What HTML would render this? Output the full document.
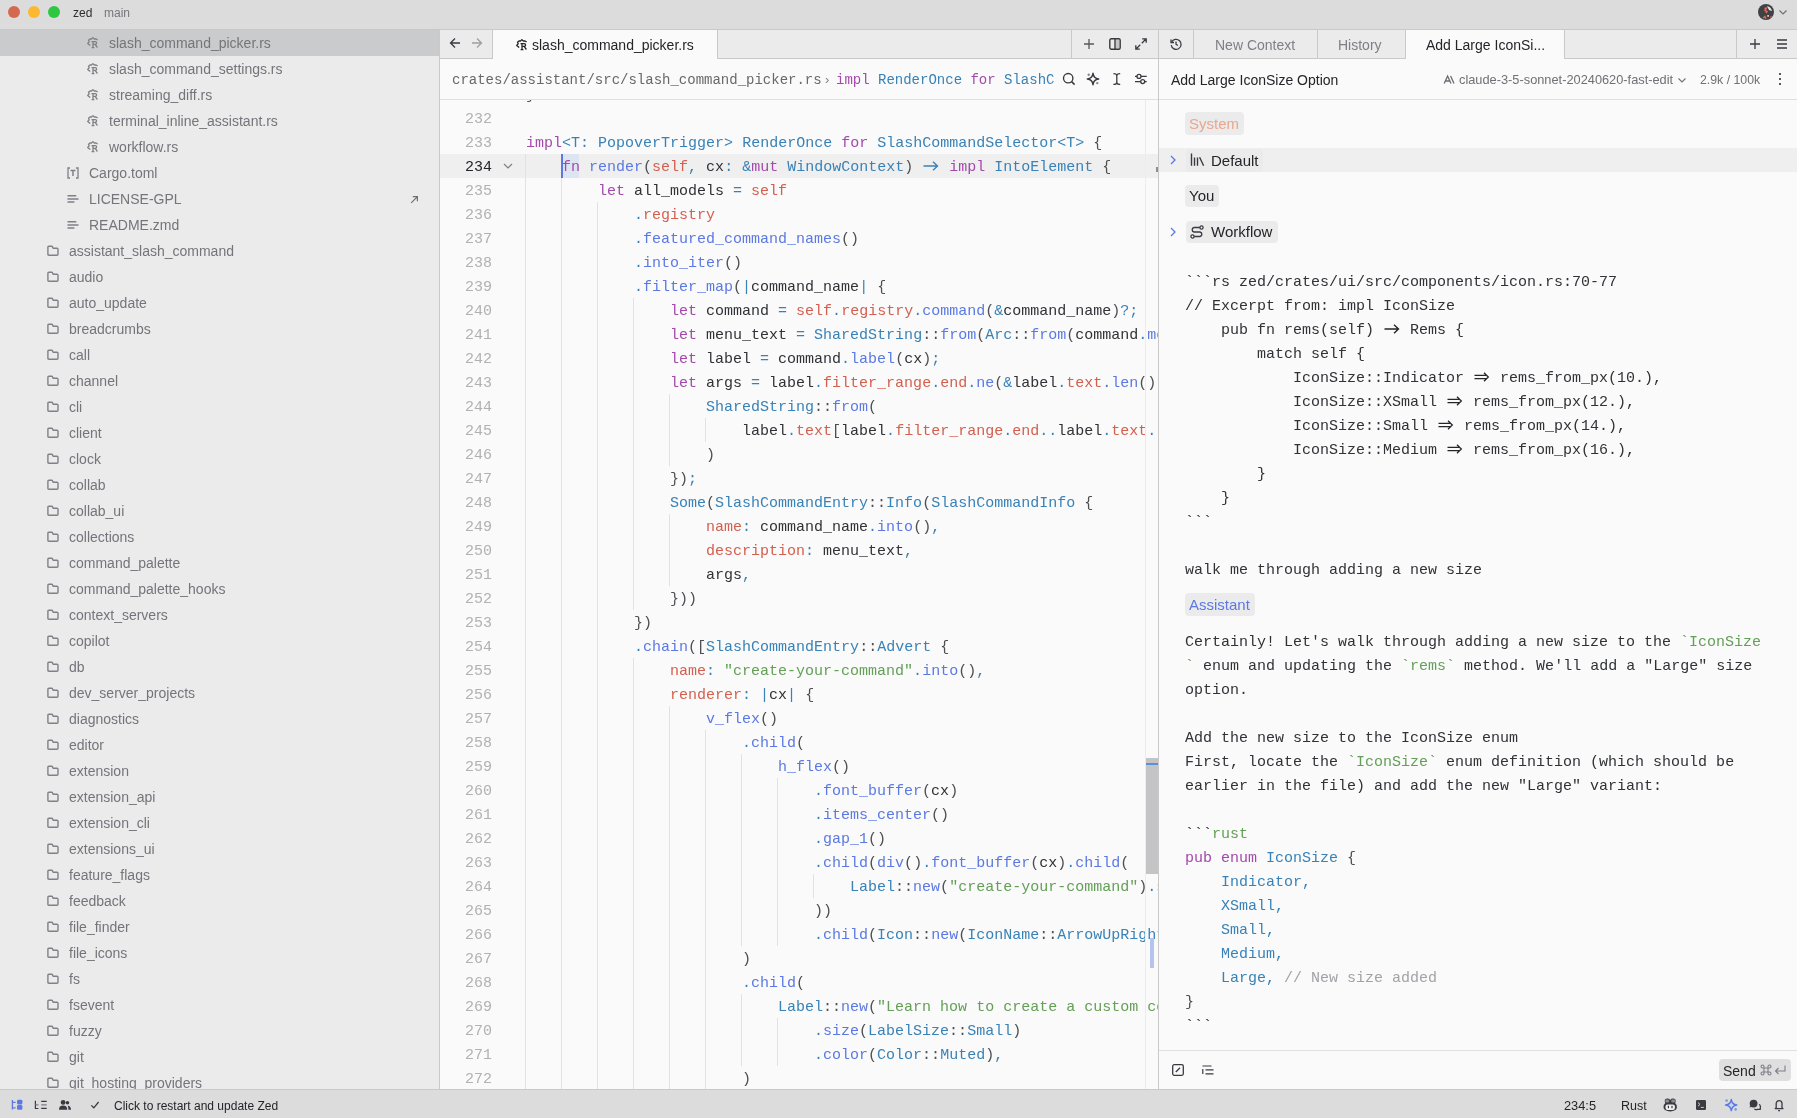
<!DOCTYPE html><html><head><meta charset="utf-8"><style>
*{box-sizing:border-box;margin:0;padding:0}
html,body{width:1797px;height:1118px;overflow:hidden;background:#dcdcdd}
body{position:relative;font-family:"Liberation Sans",sans-serif;color:#242529}
.a{position:absolute}
.mono{font-family:"Liberation Mono",monospace}
.row{position:absolute;left:0;width:439px;height:26px;line-height:26px;font-size:14px;color:#74747a;white-space:pre}
.ln{position:absolute;left:440px;width:52px;text-align:right;font-family:"Liberation Mono",monospace;font-size:15px;color:#b1b1b3;height:24px;line-height:24px}
.cl{position:absolute;left:526px;font-family:"Liberation Mono",monospace;font-size:15px;white-space:pre;height:24px;line-height:24px;color:#303236}
.g{position:absolute;width:1px;background:#e2e2e3}
.k{color:#a449ab}.t{color:#3882b7}.f{color:#5b79e3}.p{color:#d3604f}.s{color:#649f57}.o{color:#3882b7}.b{color:#4d4f52}.c{color:#a2a3a7}.tk{color:#649f57}
.rl{position:absolute;left:1185px;font-family:"Liberation Mono",monospace;font-size:15px;white-space:pre;height:24px;line-height:24px;color:#303236}
.badge{position:absolute;height:22px;line-height:22px;border-radius:4px;background:#ebebec;font-size:15px;padding:0 4px;white-space:pre}
.lig{display:inline-block;width:18px;text-align:center}
svg{position:absolute;overflow:visible}
.a,.row,.ln,.cl,.rl,.badge{will-change:transform}
</style></head><body><div class="a" style="left:0;top:0;width:1797px;height:29px;background:#dcdcdd"></div>
<div class="a" style="left:8px;top:6px;width:12px;height:12px;border-radius:6px;background:#d5694f"></div>
<div class="a" style="left:28px;top:6px;width:12px;height:12px;border-radius:6px;background:#feb82f"></div>
<div class="a" style="left:48px;top:6px;width:12px;height:12px;border-radius:6px;background:#2dc743"></div>
<div class="a" style="left:73px;top:5px;font-size:12px;line-height:16px;color:#2c2d31">zed</div>
<div class="a" style="left:104px;top:5px;font-size:12px;line-height:16px;color:#76767c">main</div>
<svg style="left:1758px;top:4px" width="16" height="16" viewBox="0 0 16 16"><circle cx="8" cy="8" r="8" fill="#404247"/><path d="M9 2 Q13 3 14 7 L11 6 Z" fill="#e8e8e8"/><path d="M6.5 4.5 L8.5 4 L7 6.5 L9 7.5 L8 9" stroke="#e46f55" stroke-width="1.4" fill="none"/><rect x="9.2" y="11" width="1.8" height="1.8" fill="#f3b39f"/><path d="M5 14 L7 12.5 L8 15" stroke="#e46f55" stroke-width="1.2" fill="none"/><path d="M12.5 12.5 L13.5 13.5" stroke="#e46f55" stroke-width="1.2"/></svg>
<svg style="left:1779px;top:10px" width="8" height="5" viewBox="0 0 8 5"><path d="M0.5 0.5 L4 4 L7.5 0.5" stroke="#6f6f75" stroke-width="1.2" fill="none"/></svg>
<div class="a" style="left:0;top:29px;width:1797px;height:1px;background:#c9c9ca"></div>
<div class="a" style="left:0;top:30px;width:439px;height:1059px;background:#ebebec;overflow:hidden">
<div class="a" style="left:0;top:0;width:439px;height:26px;background:#cacbcc"></div>
<div class="row" style="top:0px;left:109px;width:auto">slash_command_picker.rs</div>
<svg style="left:87px;top:7px" width="12" height="12" viewBox="0 0 12 12"><path d="M3.2 8.6 L0.7 6.4 L2.2 4.7 L1.5 3.3 L3 2 H4.5 L5.9 0.6 L7.3 2 H9 L10.6 2.9" stroke="#808086" stroke-width="1.3" fill="none" stroke-linejoin="round"/><path d="M4.5 4.7 H8.2 A1.4 1.35 0 0 1 8.2 7.4 H6 M6 4.7 V10.6 M4.6 10.6 H7.4 M8.1 7.4 L10.4 10.5" stroke="#808086" stroke-width="1.3" fill="none"/></svg>
<div class="row" style="top:26px;left:109px;width:auto">slash_command_settings.rs</div>
<svg style="left:87px;top:33px" width="12" height="12" viewBox="0 0 12 12"><path d="M3.2 8.6 L0.7 6.4 L2.2 4.7 L1.5 3.3 L3 2 H4.5 L5.9 0.6 L7.3 2 H9 L10.6 2.9" stroke="#808086" stroke-width="1.3" fill="none" stroke-linejoin="round"/><path d="M4.5 4.7 H8.2 A1.4 1.35 0 0 1 8.2 7.4 H6 M6 4.7 V10.6 M4.6 10.6 H7.4 M8.1 7.4 L10.4 10.5" stroke="#808086" stroke-width="1.3" fill="none"/></svg>
<div class="row" style="top:52px;left:109px;width:auto">streaming_diff.rs</div>
<svg style="left:87px;top:59px" width="12" height="12" viewBox="0 0 12 12"><path d="M3.2 8.6 L0.7 6.4 L2.2 4.7 L1.5 3.3 L3 2 H4.5 L5.9 0.6 L7.3 2 H9 L10.6 2.9" stroke="#808086" stroke-width="1.3" fill="none" stroke-linejoin="round"/><path d="M4.5 4.7 H8.2 A1.4 1.35 0 0 1 8.2 7.4 H6 M6 4.7 V10.6 M4.6 10.6 H7.4 M8.1 7.4 L10.4 10.5" stroke="#808086" stroke-width="1.3" fill="none"/></svg>
<div class="row" style="top:78px;left:109px;width:auto">terminal_inline_assistant.rs</div>
<svg style="left:87px;top:85px" width="12" height="12" viewBox="0 0 12 12"><path d="M3.2 8.6 L0.7 6.4 L2.2 4.7 L1.5 3.3 L3 2 H4.5 L5.9 0.6 L7.3 2 H9 L10.6 2.9" stroke="#808086" stroke-width="1.3" fill="none" stroke-linejoin="round"/><path d="M4.5 4.7 H8.2 A1.4 1.35 0 0 1 8.2 7.4 H6 M6 4.7 V10.6 M4.6 10.6 H7.4 M8.1 7.4 L10.4 10.5" stroke="#808086" stroke-width="1.3" fill="none"/></svg>
<div class="row" style="top:104px;left:109px;width:auto">workflow.rs</div>
<svg style="left:87px;top:111px" width="12" height="12" viewBox="0 0 12 12"><path d="M3.2 8.6 L0.7 6.4 L2.2 4.7 L1.5 3.3 L3 2 H4.5 L5.9 0.6 L7.3 2 H9 L10.6 2.9" stroke="#808086" stroke-width="1.3" fill="none" stroke-linejoin="round"/><path d="M4.5 4.7 H8.2 A1.4 1.35 0 0 1 8.2 7.4 H6 M6 4.7 V10.6 M4.6 10.6 H7.4 M8.1 7.4 L10.4 10.5" stroke="#808086" stroke-width="1.3" fill="none"/></svg>
<div class="row" style="top:130px;left:89px;width:auto">Cargo.toml</div>
<svg style="left:67px;top:137px" width="12" height="12" viewBox="0 0 12 12"><path d="M3 1 H1 V11 H3 M9 1 H11 V11 H9" stroke="#808086" stroke-width="1.3" fill="none"/><path d="M3.5 3.5 H8.5 M6 3.5 V9" stroke="#808086" stroke-width="1.5" fill="none"/></svg>
<div class="row" style="top:156px;left:89px;width:auto">LICENSE-GPL</div>
<svg style="left:67px;top:163px" width="12" height="12" viewBox="0 0 12 12"><path d="M0.5 2.8 H9.3 M0.5 6 H11.5 M0.5 9 H7.4" stroke="#808086" stroke-width="1.6" fill="none"/></svg>
<div class="row" style="top:182px;left:89px;width:auto">README.zmd</div>
<svg style="left:67px;top:189px" width="12" height="12" viewBox="0 0 12 12"><path d="M0.5 2.8 H9.3 M0.5 6 H11.5 M0.5 9 H7.4" stroke="#808086" stroke-width="1.6" fill="none"/></svg>
<div class="row" style="top:208px;left:69px;width:auto">assistant_slash_command</div>
<svg style="left:47px;top:215px" width="12" height="12" viewBox="0 0 12 12"><path d="M0.9 2.3 Q0.9 1.3 1.9 1.3 H5.2 L6.3 3.3 H10 Q11 3.3 11 4.3 V9.3 Q11 10.3 10 10.3 H1.9 Q0.9 10.3 0.9 9.3 Z" stroke="#808086" stroke-width="1.4" fill="none" stroke-linejoin="round"/></svg>
<div class="row" style="top:234px;left:69px;width:auto">audio</div>
<svg style="left:47px;top:241px" width="12" height="12" viewBox="0 0 12 12"><path d="M0.9 2.3 Q0.9 1.3 1.9 1.3 H5.2 L6.3 3.3 H10 Q11 3.3 11 4.3 V9.3 Q11 10.3 10 10.3 H1.9 Q0.9 10.3 0.9 9.3 Z" stroke="#808086" stroke-width="1.4" fill="none" stroke-linejoin="round"/></svg>
<div class="row" style="top:260px;left:69px;width:auto">auto_update</div>
<svg style="left:47px;top:267px" width="12" height="12" viewBox="0 0 12 12"><path d="M0.9 2.3 Q0.9 1.3 1.9 1.3 H5.2 L6.3 3.3 H10 Q11 3.3 11 4.3 V9.3 Q11 10.3 10 10.3 H1.9 Q0.9 10.3 0.9 9.3 Z" stroke="#808086" stroke-width="1.4" fill="none" stroke-linejoin="round"/></svg>
<div class="row" style="top:286px;left:69px;width:auto">breadcrumbs</div>
<svg style="left:47px;top:293px" width="12" height="12" viewBox="0 0 12 12"><path d="M0.9 2.3 Q0.9 1.3 1.9 1.3 H5.2 L6.3 3.3 H10 Q11 3.3 11 4.3 V9.3 Q11 10.3 10 10.3 H1.9 Q0.9 10.3 0.9 9.3 Z" stroke="#808086" stroke-width="1.4" fill="none" stroke-linejoin="round"/></svg>
<div class="row" style="top:312px;left:69px;width:auto">call</div>
<svg style="left:47px;top:319px" width="12" height="12" viewBox="0 0 12 12"><path d="M0.9 2.3 Q0.9 1.3 1.9 1.3 H5.2 L6.3 3.3 H10 Q11 3.3 11 4.3 V9.3 Q11 10.3 10 10.3 H1.9 Q0.9 10.3 0.9 9.3 Z" stroke="#808086" stroke-width="1.4" fill="none" stroke-linejoin="round"/></svg>
<div class="row" style="top:338px;left:69px;width:auto">channel</div>
<svg style="left:47px;top:345px" width="12" height="12" viewBox="0 0 12 12"><path d="M0.9 2.3 Q0.9 1.3 1.9 1.3 H5.2 L6.3 3.3 H10 Q11 3.3 11 4.3 V9.3 Q11 10.3 10 10.3 H1.9 Q0.9 10.3 0.9 9.3 Z" stroke="#808086" stroke-width="1.4" fill="none" stroke-linejoin="round"/></svg>
<div class="row" style="top:364px;left:69px;width:auto">cli</div>
<svg style="left:47px;top:371px" width="12" height="12" viewBox="0 0 12 12"><path d="M0.9 2.3 Q0.9 1.3 1.9 1.3 H5.2 L6.3 3.3 H10 Q11 3.3 11 4.3 V9.3 Q11 10.3 10 10.3 H1.9 Q0.9 10.3 0.9 9.3 Z" stroke="#808086" stroke-width="1.4" fill="none" stroke-linejoin="round"/></svg>
<div class="row" style="top:390px;left:69px;width:auto">client</div>
<svg style="left:47px;top:397px" width="12" height="12" viewBox="0 0 12 12"><path d="M0.9 2.3 Q0.9 1.3 1.9 1.3 H5.2 L6.3 3.3 H10 Q11 3.3 11 4.3 V9.3 Q11 10.3 10 10.3 H1.9 Q0.9 10.3 0.9 9.3 Z" stroke="#808086" stroke-width="1.4" fill="none" stroke-linejoin="round"/></svg>
<div class="row" style="top:416px;left:69px;width:auto">clock</div>
<svg style="left:47px;top:423px" width="12" height="12" viewBox="0 0 12 12"><path d="M0.9 2.3 Q0.9 1.3 1.9 1.3 H5.2 L6.3 3.3 H10 Q11 3.3 11 4.3 V9.3 Q11 10.3 10 10.3 H1.9 Q0.9 10.3 0.9 9.3 Z" stroke="#808086" stroke-width="1.4" fill="none" stroke-linejoin="round"/></svg>
<div class="row" style="top:442px;left:69px;width:auto">collab</div>
<svg style="left:47px;top:449px" width="12" height="12" viewBox="0 0 12 12"><path d="M0.9 2.3 Q0.9 1.3 1.9 1.3 H5.2 L6.3 3.3 H10 Q11 3.3 11 4.3 V9.3 Q11 10.3 10 10.3 H1.9 Q0.9 10.3 0.9 9.3 Z" stroke="#808086" stroke-width="1.4" fill="none" stroke-linejoin="round"/></svg>
<div class="row" style="top:468px;left:69px;width:auto">collab_ui</div>
<svg style="left:47px;top:475px" width="12" height="12" viewBox="0 0 12 12"><path d="M0.9 2.3 Q0.9 1.3 1.9 1.3 H5.2 L6.3 3.3 H10 Q11 3.3 11 4.3 V9.3 Q11 10.3 10 10.3 H1.9 Q0.9 10.3 0.9 9.3 Z" stroke="#808086" stroke-width="1.4" fill="none" stroke-linejoin="round"/></svg>
<div class="row" style="top:494px;left:69px;width:auto">collections</div>
<svg style="left:47px;top:501px" width="12" height="12" viewBox="0 0 12 12"><path d="M0.9 2.3 Q0.9 1.3 1.9 1.3 H5.2 L6.3 3.3 H10 Q11 3.3 11 4.3 V9.3 Q11 10.3 10 10.3 H1.9 Q0.9 10.3 0.9 9.3 Z" stroke="#808086" stroke-width="1.4" fill="none" stroke-linejoin="round"/></svg>
<div class="row" style="top:520px;left:69px;width:auto">command_palette</div>
<svg style="left:47px;top:527px" width="12" height="12" viewBox="0 0 12 12"><path d="M0.9 2.3 Q0.9 1.3 1.9 1.3 H5.2 L6.3 3.3 H10 Q11 3.3 11 4.3 V9.3 Q11 10.3 10 10.3 H1.9 Q0.9 10.3 0.9 9.3 Z" stroke="#808086" stroke-width="1.4" fill="none" stroke-linejoin="round"/></svg>
<div class="row" style="top:546px;left:69px;width:auto">command_palette_hooks</div>
<svg style="left:47px;top:553px" width="12" height="12" viewBox="0 0 12 12"><path d="M0.9 2.3 Q0.9 1.3 1.9 1.3 H5.2 L6.3 3.3 H10 Q11 3.3 11 4.3 V9.3 Q11 10.3 10 10.3 H1.9 Q0.9 10.3 0.9 9.3 Z" stroke="#808086" stroke-width="1.4" fill="none" stroke-linejoin="round"/></svg>
<div class="row" style="top:572px;left:69px;width:auto">context_servers</div>
<svg style="left:47px;top:579px" width="12" height="12" viewBox="0 0 12 12"><path d="M0.9 2.3 Q0.9 1.3 1.9 1.3 H5.2 L6.3 3.3 H10 Q11 3.3 11 4.3 V9.3 Q11 10.3 10 10.3 H1.9 Q0.9 10.3 0.9 9.3 Z" stroke="#808086" stroke-width="1.4" fill="none" stroke-linejoin="round"/></svg>
<div class="row" style="top:598px;left:69px;width:auto">copilot</div>
<svg style="left:47px;top:605px" width="12" height="12" viewBox="0 0 12 12"><path d="M0.9 2.3 Q0.9 1.3 1.9 1.3 H5.2 L6.3 3.3 H10 Q11 3.3 11 4.3 V9.3 Q11 10.3 10 10.3 H1.9 Q0.9 10.3 0.9 9.3 Z" stroke="#808086" stroke-width="1.4" fill="none" stroke-linejoin="round"/></svg>
<div class="row" style="top:624px;left:69px;width:auto">db</div>
<svg style="left:47px;top:631px" width="12" height="12" viewBox="0 0 12 12"><path d="M0.9 2.3 Q0.9 1.3 1.9 1.3 H5.2 L6.3 3.3 H10 Q11 3.3 11 4.3 V9.3 Q11 10.3 10 10.3 H1.9 Q0.9 10.3 0.9 9.3 Z" stroke="#808086" stroke-width="1.4" fill="none" stroke-linejoin="round"/></svg>
<div class="row" style="top:650px;left:69px;width:auto">dev_server_projects</div>
<svg style="left:47px;top:657px" width="12" height="12" viewBox="0 0 12 12"><path d="M0.9 2.3 Q0.9 1.3 1.9 1.3 H5.2 L6.3 3.3 H10 Q11 3.3 11 4.3 V9.3 Q11 10.3 10 10.3 H1.9 Q0.9 10.3 0.9 9.3 Z" stroke="#808086" stroke-width="1.4" fill="none" stroke-linejoin="round"/></svg>
<div class="row" style="top:676px;left:69px;width:auto">diagnostics</div>
<svg style="left:47px;top:683px" width="12" height="12" viewBox="0 0 12 12"><path d="M0.9 2.3 Q0.9 1.3 1.9 1.3 H5.2 L6.3 3.3 H10 Q11 3.3 11 4.3 V9.3 Q11 10.3 10 10.3 H1.9 Q0.9 10.3 0.9 9.3 Z" stroke="#808086" stroke-width="1.4" fill="none" stroke-linejoin="round"/></svg>
<div class="row" style="top:702px;left:69px;width:auto">editor</div>
<svg style="left:47px;top:709px" width="12" height="12" viewBox="0 0 12 12"><path d="M0.9 2.3 Q0.9 1.3 1.9 1.3 H5.2 L6.3 3.3 H10 Q11 3.3 11 4.3 V9.3 Q11 10.3 10 10.3 H1.9 Q0.9 10.3 0.9 9.3 Z" stroke="#808086" stroke-width="1.4" fill="none" stroke-linejoin="round"/></svg>
<div class="row" style="top:728px;left:69px;width:auto">extension</div>
<svg style="left:47px;top:735px" width="12" height="12" viewBox="0 0 12 12"><path d="M0.9 2.3 Q0.9 1.3 1.9 1.3 H5.2 L6.3 3.3 H10 Q11 3.3 11 4.3 V9.3 Q11 10.3 10 10.3 H1.9 Q0.9 10.3 0.9 9.3 Z" stroke="#808086" stroke-width="1.4" fill="none" stroke-linejoin="round"/></svg>
<div class="row" style="top:754px;left:69px;width:auto">extension_api</div>
<svg style="left:47px;top:761px" width="12" height="12" viewBox="0 0 12 12"><path d="M0.9 2.3 Q0.9 1.3 1.9 1.3 H5.2 L6.3 3.3 H10 Q11 3.3 11 4.3 V9.3 Q11 10.3 10 10.3 H1.9 Q0.9 10.3 0.9 9.3 Z" stroke="#808086" stroke-width="1.4" fill="none" stroke-linejoin="round"/></svg>
<div class="row" style="top:780px;left:69px;width:auto">extension_cli</div>
<svg style="left:47px;top:787px" width="12" height="12" viewBox="0 0 12 12"><path d="M0.9 2.3 Q0.9 1.3 1.9 1.3 H5.2 L6.3 3.3 H10 Q11 3.3 11 4.3 V9.3 Q11 10.3 10 10.3 H1.9 Q0.9 10.3 0.9 9.3 Z" stroke="#808086" stroke-width="1.4" fill="none" stroke-linejoin="round"/></svg>
<div class="row" style="top:806px;left:69px;width:auto">extensions_ui</div>
<svg style="left:47px;top:813px" width="12" height="12" viewBox="0 0 12 12"><path d="M0.9 2.3 Q0.9 1.3 1.9 1.3 H5.2 L6.3 3.3 H10 Q11 3.3 11 4.3 V9.3 Q11 10.3 10 10.3 H1.9 Q0.9 10.3 0.9 9.3 Z" stroke="#808086" stroke-width="1.4" fill="none" stroke-linejoin="round"/></svg>
<div class="row" style="top:832px;left:69px;width:auto">feature_flags</div>
<svg style="left:47px;top:839px" width="12" height="12" viewBox="0 0 12 12"><path d="M0.9 2.3 Q0.9 1.3 1.9 1.3 H5.2 L6.3 3.3 H10 Q11 3.3 11 4.3 V9.3 Q11 10.3 10 10.3 H1.9 Q0.9 10.3 0.9 9.3 Z" stroke="#808086" stroke-width="1.4" fill="none" stroke-linejoin="round"/></svg>
<div class="row" style="top:858px;left:69px;width:auto">feedback</div>
<svg style="left:47px;top:865px" width="12" height="12" viewBox="0 0 12 12"><path d="M0.9 2.3 Q0.9 1.3 1.9 1.3 H5.2 L6.3 3.3 H10 Q11 3.3 11 4.3 V9.3 Q11 10.3 10 10.3 H1.9 Q0.9 10.3 0.9 9.3 Z" stroke="#808086" stroke-width="1.4" fill="none" stroke-linejoin="round"/></svg>
<div class="row" style="top:884px;left:69px;width:auto">file_finder</div>
<svg style="left:47px;top:891px" width="12" height="12" viewBox="0 0 12 12"><path d="M0.9 2.3 Q0.9 1.3 1.9 1.3 H5.2 L6.3 3.3 H10 Q11 3.3 11 4.3 V9.3 Q11 10.3 10 10.3 H1.9 Q0.9 10.3 0.9 9.3 Z" stroke="#808086" stroke-width="1.4" fill="none" stroke-linejoin="round"/></svg>
<div class="row" style="top:910px;left:69px;width:auto">file_icons</div>
<svg style="left:47px;top:917px" width="12" height="12" viewBox="0 0 12 12"><path d="M0.9 2.3 Q0.9 1.3 1.9 1.3 H5.2 L6.3 3.3 H10 Q11 3.3 11 4.3 V9.3 Q11 10.3 10 10.3 H1.9 Q0.9 10.3 0.9 9.3 Z" stroke="#808086" stroke-width="1.4" fill="none" stroke-linejoin="round"/></svg>
<div class="row" style="top:936px;left:69px;width:auto">fs</div>
<svg style="left:47px;top:943px" width="12" height="12" viewBox="0 0 12 12"><path d="M0.9 2.3 Q0.9 1.3 1.9 1.3 H5.2 L6.3 3.3 H10 Q11 3.3 11 4.3 V9.3 Q11 10.3 10 10.3 H1.9 Q0.9 10.3 0.9 9.3 Z" stroke="#808086" stroke-width="1.4" fill="none" stroke-linejoin="round"/></svg>
<div class="row" style="top:962px;left:69px;width:auto">fsevent</div>
<svg style="left:47px;top:969px" width="12" height="12" viewBox="0 0 12 12"><path d="M0.9 2.3 Q0.9 1.3 1.9 1.3 H5.2 L6.3 3.3 H10 Q11 3.3 11 4.3 V9.3 Q11 10.3 10 10.3 H1.9 Q0.9 10.3 0.9 9.3 Z" stroke="#808086" stroke-width="1.4" fill="none" stroke-linejoin="round"/></svg>
<div class="row" style="top:988px;left:69px;width:auto">fuzzy</div>
<svg style="left:47px;top:995px" width="12" height="12" viewBox="0 0 12 12"><path d="M0.9 2.3 Q0.9 1.3 1.9 1.3 H5.2 L6.3 3.3 H10 Q11 3.3 11 4.3 V9.3 Q11 10.3 10 10.3 H1.9 Q0.9 10.3 0.9 9.3 Z" stroke="#808086" stroke-width="1.4" fill="none" stroke-linejoin="round"/></svg>
<div class="row" style="top:1014px;left:69px;width:auto">git</div>
<svg style="left:47px;top:1021px" width="12" height="12" viewBox="0 0 12 12"><path d="M0.9 2.3 Q0.9 1.3 1.9 1.3 H5.2 L6.3 3.3 H10 Q11 3.3 11 4.3 V9.3 Q11 10.3 10 10.3 H1.9 Q0.9 10.3 0.9 9.3 Z" stroke="#808086" stroke-width="1.4" fill="none" stroke-linejoin="round"/></svg>
<div class="row" style="top:1040px;left:69px;width:auto">git_hosting_providers</div>
<svg style="left:47px;top:1047px" width="12" height="12" viewBox="0 0 12 12"><path d="M0.9 2.3 Q0.9 1.3 1.9 1.3 H5.2 L6.3 3.3 H10 Q11 3.3 11 4.3 V9.3 Q11 10.3 10 10.3 H1.9 Q0.9 10.3 0.9 9.3 Z" stroke="#808086" stroke-width="1.4" fill="none" stroke-linejoin="round"/></svg>
<svg style="left:410px;top:165px" width="9" height="9" viewBox="0 0 9 9"><path d="M1.2 7.8 L7.2 1.8 M2.8 1.6 H7.4 V6.2" stroke="#6f6f75" stroke-width="1.2" fill="none"/></svg>
</div>
<div class="a" style="left:439px;top:30px;width:1px;height:1059px;background:#c9c9ca"></div>
<div class="a" style="left:440px;top:30px;width:718px;height:1059px;background:#fafafa;overflow:hidden">
<div class="a" style="left:0;top:0;width:718px;height:29px;background:#ebebec;border-bottom:1px solid #c9c9ca"></div>
<div class="a" style="left:52px;top:0;width:226px;height:29px;background:#fafafa;border-left:1px solid #c9c9ca;border-right:1px solid #c9c9ca"></div>
<div class="a" style="left:631px;top:0;width:1px;height:29px;background:#c9c9ca"></div>
<svg style="left:9px;top:7px" width="12" height="12" viewBox="0 0 12 12"><path d="M11 6 H1.5 M6 1.5 L1.5 6 L6 10.5" stroke="#393b40" stroke-width="1.3" fill="none"/></svg>
<svg style="left:31px;top:7px" width="12" height="12" viewBox="0 0 12 12"><path d="M1 6 H10.5 M6 1.5 L10.5 6 L6 10.5" stroke="#a0a0a4" stroke-width="1.3" fill="none"/></svg>
<svg style="left:76px;top:9px" width="12" height="12" viewBox="0 0 12 12"><path d="M3.2 8.6 L0.7 6.4 L2.2 4.7 L1.5 3.3 L3 2 H4.5 L5.9 0.6 L7.3 2 H9 L10.6 2.9" stroke="#242529" stroke-width="1.3" fill="none" stroke-linejoin="round"/><path d="M4.5 4.7 H8.2 A1.4 1.35 0 0 1 8.2 7.4 H6 M6 4.7 V10.6 M4.6 10.6 H7.4 M8.1 7.4 L10.4 10.5" stroke="#242529" stroke-width="1.3" fill="none"/></svg>
<div class="a" style="left:92px;top:6px;font-size:14px;line-height:18px;color:#242529;white-space:pre">slash_command_picker.rs</div>
<svg style="left:643px;top:8px" width="12" height="12" viewBox="0 0 12 12"><path d="M6 1 V11 M1 6 H11" stroke="#58585a" stroke-width="1.3" fill="none"/></svg>
<svg style="left:669px;top:8px" width="12" height="12" viewBox="0 0 12 12"><rect x="0.8" y="0.8" width="10.4" height="10.4" rx="1.5" stroke="#393b40" stroke-width="1.4" fill="none"/><path d="M6 1 V11" stroke="#393b40" stroke-width="1.4"/><rect x="6.5" y="1.5" width="4" height="9" fill="#393b40" opacity="0.22"/></svg>
<svg style="left:695px;top:8px" width="12" height="12" viewBox="0 0 12 12"><path d="M7.2 0.8 H11.2 V4.8 M11.2 0.8 L6.8 5.2 M4.8 11.2 H0.8 V7.2 M0.8 11.2 L5.2 6.8" stroke="#3a3b40" stroke-width="1.3" fill="none"/></svg>
<div class="a mono" style="left:12px;top:41px;font-size:14px;line-height:18px;color:#68686d;white-space:pre">crates/assistant/src/slash_command_picker.rs</div>
<div class="a" style="left:385px;top:41px;font-size:13px;line-height:18px;color:#7e7e87">›</div>
<div class="a mono" style="left:396px;top:41px;font-size:14px;line-height:18px;white-space:pre"><span class="k">impl</span> <span class="t">RenderOnce</span> <span class="k">for</span> <span class="t">SlashC</span></div>
<div class="a" style="left:0;top:69px;width:718px;height:1px;background:#dfdfe0"></div>
</div>
<div class="a" style="left:440px;top:100px;width:718px;height:989px;background:#fafafa;overflow:hidden">
<div class="a" style="left:0;top:54px;width:718px;height:24px;background:#efeff0"></div>
<div class="g" style="left:85px;top:54px;height:24px"></div>
<div class="g" style="left:85px;top:78px;height:24px"></div>
<div class="g" style="left:121px;top:78px;height:24px"></div>
<div class="g" style="left:85px;top:102px;height:24px"></div>
<div class="g" style="left:121px;top:102px;height:24px"></div>
<div class="g" style="left:157px;top:102px;height:24px"></div>
<div class="g" style="left:85px;top:126px;height:24px"></div>
<div class="g" style="left:121px;top:126px;height:24px"></div>
<div class="g" style="left:157px;top:126px;height:24px"></div>
<div class="g" style="left:85px;top:150px;height:24px"></div>
<div class="g" style="left:121px;top:150px;height:24px"></div>
<div class="g" style="left:157px;top:150px;height:24px"></div>
<div class="g" style="left:85px;top:174px;height:24px"></div>
<div class="g" style="left:121px;top:174px;height:24px"></div>
<div class="g" style="left:157px;top:174px;height:24px"></div>
<div class="g" style="left:85px;top:198px;height:24px"></div>
<div class="g" style="left:121px;top:198px;height:24px"></div>
<div class="g" style="left:157px;top:198px;height:24px"></div>
<div class="g" style="left:193px;top:198px;height:24px"></div>
<div class="g" style="left:85px;top:222px;height:24px"></div>
<div class="g" style="left:121px;top:222px;height:24px"></div>
<div class="g" style="left:157px;top:222px;height:24px"></div>
<div class="g" style="left:193px;top:222px;height:24px"></div>
<div class="g" style="left:85px;top:246px;height:24px"></div>
<div class="g" style="left:121px;top:246px;height:24px"></div>
<div class="g" style="left:157px;top:246px;height:24px"></div>
<div class="g" style="left:193px;top:246px;height:24px"></div>
<div class="g" style="left:85px;top:270px;height:24px"></div>
<div class="g" style="left:121px;top:270px;height:24px"></div>
<div class="g" style="left:157px;top:270px;height:24px"></div>
<div class="g" style="left:193px;top:270px;height:24px"></div>
<div class="g" style="left:85px;top:294px;height:24px"></div>
<div class="g" style="left:121px;top:294px;height:24px"></div>
<div class="g" style="left:157px;top:294px;height:24px"></div>
<div class="g" style="left:193px;top:294px;height:24px"></div>
<div class="g" style="left:229px;top:294px;height:24px"></div>
<div class="g" style="left:85px;top:318px;height:24px"></div>
<div class="g" style="left:121px;top:318px;height:24px"></div>
<div class="g" style="left:157px;top:318px;height:24px"></div>
<div class="g" style="left:193px;top:318px;height:24px"></div>
<div class="g" style="left:229px;top:318px;height:24px"></div>
<div class="g" style="left:265px;top:318px;height:24px"></div>
<div class="g" style="left:85px;top:342px;height:24px"></div>
<div class="g" style="left:121px;top:342px;height:24px"></div>
<div class="g" style="left:157px;top:342px;height:24px"></div>
<div class="g" style="left:193px;top:342px;height:24px"></div>
<div class="g" style="left:229px;top:342px;height:24px"></div>
<div class="g" style="left:85px;top:366px;height:24px"></div>
<div class="g" style="left:121px;top:366px;height:24px"></div>
<div class="g" style="left:157px;top:366px;height:24px"></div>
<div class="g" style="left:193px;top:366px;height:24px"></div>
<div class="g" style="left:85px;top:390px;height:24px"></div>
<div class="g" style="left:121px;top:390px;height:24px"></div>
<div class="g" style="left:157px;top:390px;height:24px"></div>
<div class="g" style="left:193px;top:390px;height:24px"></div>
<div class="g" style="left:85px;top:414px;height:24px"></div>
<div class="g" style="left:121px;top:414px;height:24px"></div>
<div class="g" style="left:157px;top:414px;height:24px"></div>
<div class="g" style="left:193px;top:414px;height:24px"></div>
<div class="g" style="left:229px;top:414px;height:24px"></div>
<div class="g" style="left:85px;top:438px;height:24px"></div>
<div class="g" style="left:121px;top:438px;height:24px"></div>
<div class="g" style="left:157px;top:438px;height:24px"></div>
<div class="g" style="left:193px;top:438px;height:24px"></div>
<div class="g" style="left:229px;top:438px;height:24px"></div>
<div class="g" style="left:85px;top:462px;height:24px"></div>
<div class="g" style="left:121px;top:462px;height:24px"></div>
<div class="g" style="left:157px;top:462px;height:24px"></div>
<div class="g" style="left:193px;top:462px;height:24px"></div>
<div class="g" style="left:229px;top:462px;height:24px"></div>
<div class="g" style="left:85px;top:486px;height:24px"></div>
<div class="g" style="left:121px;top:486px;height:24px"></div>
<div class="g" style="left:157px;top:486px;height:24px"></div>
<div class="g" style="left:193px;top:486px;height:24px"></div>
<div class="g" style="left:85px;top:510px;height:24px"></div>
<div class="g" style="left:121px;top:510px;height:24px"></div>
<div class="g" style="left:157px;top:510px;height:24px"></div>
<div class="g" style="left:85px;top:534px;height:24px"></div>
<div class="g" style="left:121px;top:534px;height:24px"></div>
<div class="g" style="left:157px;top:534px;height:24px"></div>
<div class="g" style="left:85px;top:558px;height:24px"></div>
<div class="g" style="left:121px;top:558px;height:24px"></div>
<div class="g" style="left:157px;top:558px;height:24px"></div>
<div class="g" style="left:193px;top:558px;height:24px"></div>
<div class="g" style="left:85px;top:582px;height:24px"></div>
<div class="g" style="left:121px;top:582px;height:24px"></div>
<div class="g" style="left:157px;top:582px;height:24px"></div>
<div class="g" style="left:193px;top:582px;height:24px"></div>
<div class="g" style="left:85px;top:606px;height:24px"></div>
<div class="g" style="left:121px;top:606px;height:24px"></div>
<div class="g" style="left:157px;top:606px;height:24px"></div>
<div class="g" style="left:193px;top:606px;height:24px"></div>
<div class="g" style="left:229px;top:606px;height:24px"></div>
<div class="g" style="left:85px;top:630px;height:24px"></div>
<div class="g" style="left:121px;top:630px;height:24px"></div>
<div class="g" style="left:157px;top:630px;height:24px"></div>
<div class="g" style="left:193px;top:630px;height:24px"></div>
<div class="g" style="left:229px;top:630px;height:24px"></div>
<div class="g" style="left:265px;top:630px;height:24px"></div>
<div class="g" style="left:85px;top:654px;height:24px"></div>
<div class="g" style="left:121px;top:654px;height:24px"></div>
<div class="g" style="left:157px;top:654px;height:24px"></div>
<div class="g" style="left:193px;top:654px;height:24px"></div>
<div class="g" style="left:229px;top:654px;height:24px"></div>
<div class="g" style="left:265px;top:654px;height:24px"></div>
<div class="g" style="left:301px;top:654px;height:24px"></div>
<div class="g" style="left:85px;top:678px;height:24px"></div>
<div class="g" style="left:121px;top:678px;height:24px"></div>
<div class="g" style="left:157px;top:678px;height:24px"></div>
<div class="g" style="left:193px;top:678px;height:24px"></div>
<div class="g" style="left:229px;top:678px;height:24px"></div>
<div class="g" style="left:265px;top:678px;height:24px"></div>
<div class="g" style="left:301px;top:678px;height:24px"></div>
<div class="g" style="left:337px;top:678px;height:24px"></div>
<div class="g" style="left:85px;top:702px;height:24px"></div>
<div class="g" style="left:121px;top:702px;height:24px"></div>
<div class="g" style="left:157px;top:702px;height:24px"></div>
<div class="g" style="left:193px;top:702px;height:24px"></div>
<div class="g" style="left:229px;top:702px;height:24px"></div>
<div class="g" style="left:265px;top:702px;height:24px"></div>
<div class="g" style="left:301px;top:702px;height:24px"></div>
<div class="g" style="left:337px;top:702px;height:24px"></div>
<div class="g" style="left:85px;top:726px;height:24px"></div>
<div class="g" style="left:121px;top:726px;height:24px"></div>
<div class="g" style="left:157px;top:726px;height:24px"></div>
<div class="g" style="left:193px;top:726px;height:24px"></div>
<div class="g" style="left:229px;top:726px;height:24px"></div>
<div class="g" style="left:265px;top:726px;height:24px"></div>
<div class="g" style="left:301px;top:726px;height:24px"></div>
<div class="g" style="left:337px;top:726px;height:24px"></div>
<div class="g" style="left:85px;top:750px;height:24px"></div>
<div class="g" style="left:121px;top:750px;height:24px"></div>
<div class="g" style="left:157px;top:750px;height:24px"></div>
<div class="g" style="left:193px;top:750px;height:24px"></div>
<div class="g" style="left:229px;top:750px;height:24px"></div>
<div class="g" style="left:265px;top:750px;height:24px"></div>
<div class="g" style="left:301px;top:750px;height:24px"></div>
<div class="g" style="left:337px;top:750px;height:24px"></div>
<div class="g" style="left:85px;top:774px;height:24px"></div>
<div class="g" style="left:121px;top:774px;height:24px"></div>
<div class="g" style="left:157px;top:774px;height:24px"></div>
<div class="g" style="left:193px;top:774px;height:24px"></div>
<div class="g" style="left:229px;top:774px;height:24px"></div>
<div class="g" style="left:265px;top:774px;height:24px"></div>
<div class="g" style="left:301px;top:774px;height:24px"></div>
<div class="g" style="left:337px;top:774px;height:24px"></div>
<div class="g" style="left:373px;top:774px;height:24px"></div>
<div class="g" style="left:85px;top:798px;height:24px"></div>
<div class="g" style="left:121px;top:798px;height:24px"></div>
<div class="g" style="left:157px;top:798px;height:24px"></div>
<div class="g" style="left:193px;top:798px;height:24px"></div>
<div class="g" style="left:229px;top:798px;height:24px"></div>
<div class="g" style="left:265px;top:798px;height:24px"></div>
<div class="g" style="left:301px;top:798px;height:24px"></div>
<div class="g" style="left:337px;top:798px;height:24px"></div>
<div class="g" style="left:85px;top:822px;height:24px"></div>
<div class="g" style="left:121px;top:822px;height:24px"></div>
<div class="g" style="left:157px;top:822px;height:24px"></div>
<div class="g" style="left:193px;top:822px;height:24px"></div>
<div class="g" style="left:229px;top:822px;height:24px"></div>
<div class="g" style="left:265px;top:822px;height:24px"></div>
<div class="g" style="left:301px;top:822px;height:24px"></div>
<div class="g" style="left:337px;top:822px;height:24px"></div>
<div class="g" style="left:85px;top:846px;height:24px"></div>
<div class="g" style="left:121px;top:846px;height:24px"></div>
<div class="g" style="left:157px;top:846px;height:24px"></div>
<div class="g" style="left:193px;top:846px;height:24px"></div>
<div class="g" style="left:229px;top:846px;height:24px"></div>
<div class="g" style="left:265px;top:846px;height:24px"></div>
<div class="g" style="left:85px;top:870px;height:24px"></div>
<div class="g" style="left:121px;top:870px;height:24px"></div>
<div class="g" style="left:157px;top:870px;height:24px"></div>
<div class="g" style="left:193px;top:870px;height:24px"></div>
<div class="g" style="left:229px;top:870px;height:24px"></div>
<div class="g" style="left:265px;top:870px;height:24px"></div>
<div class="g" style="left:85px;top:894px;height:24px"></div>
<div class="g" style="left:121px;top:894px;height:24px"></div>
<div class="g" style="left:157px;top:894px;height:24px"></div>
<div class="g" style="left:193px;top:894px;height:24px"></div>
<div class="g" style="left:229px;top:894px;height:24px"></div>
<div class="g" style="left:265px;top:894px;height:24px"></div>
<div class="g" style="left:301px;top:894px;height:24px"></div>
<div class="g" style="left:85px;top:918px;height:24px"></div>
<div class="g" style="left:121px;top:918px;height:24px"></div>
<div class="g" style="left:157px;top:918px;height:24px"></div>
<div class="g" style="left:193px;top:918px;height:24px"></div>
<div class="g" style="left:229px;top:918px;height:24px"></div>
<div class="g" style="left:265px;top:918px;height:24px"></div>
<div class="g" style="left:301px;top:918px;height:24px"></div>
<div class="g" style="left:337px;top:918px;height:24px"></div>
<div class="g" style="left:85px;top:942px;height:24px"></div>
<div class="g" style="left:121px;top:942px;height:24px"></div>
<div class="g" style="left:157px;top:942px;height:24px"></div>
<div class="g" style="left:193px;top:942px;height:24px"></div>
<div class="g" style="left:229px;top:942px;height:24px"></div>
<div class="g" style="left:265px;top:942px;height:24px"></div>
<div class="g" style="left:301px;top:942px;height:24px"></div>
<div class="g" style="left:337px;top:942px;height:24px"></div>
<div class="g" style="left:85px;top:966px;height:24px"></div>
<div class="g" style="left:121px;top:966px;height:24px"></div>
<div class="g" style="left:157px;top:966px;height:24px"></div>
<div class="g" style="left:193px;top:966px;height:24px"></div>
<div class="g" style="left:229px;top:966px;height:24px"></div>
<div class="g" style="left:265px;top:966px;height:24px"></div>
<div class="g" style="left:85px;top:990px;height:24px"></div>
<div class="g" style="left:121px;top:990px;height:24px"></div>
<div class="g" style="left:157px;top:990px;height:24px"></div>
<div class="g" style="left:193px;top:990px;height:24px"></div>
<div class="a" style="left:122px;top:54px;width:17px;height:24px;background:#dde5f2"></div>
<div class="cl" style="left:86px;top:-16px"><span class="b">}</span></div>
<div class="ln" style="left:0;top:8px;color:#b1b1b3">232</div>
<div class="cl" style="left:86px;top:8px"></div>
<div class="ln" style="left:0;top:32px;color:#b1b1b3">233</div>
<div class="cl" style="left:86px;top:32px"><span class="k">impl</span><span class="o">&lt;</span><span class="t">T</span><span class="o">:</span> <span class="t">PopoverTrigger</span><span class="o">&gt;</span> <span class="t">RenderOnce</span> <span class="k">for</span> <span class="t">SlashCommandSelector</span><span class="o">&lt;</span><span class="t">T</span><span class="o">&gt;</span> <span class="b">{</span></div>
<div class="ln" style="left:0;top:56px;color:#242529">234</div>
<div class="cl" style="left:86px;top:56px">    <span class="k">fn</span> <span class="f">render</span><span class="b">(</span><span class="p">self</span><span class="o">,</span> cx<span class="o">:</span> <span class="o">&amp;</span><span class="k">mut</span> <span class="t">WindowContext</span><span class="b">)</span>    <span class="k">impl</span> <span class="t">IntoElement</span> <span class="b">{</span></div>
<svg style="left:482px;top:61px" width="18" height="10" viewBox="0 0 18 10"><path d="M1.5 5 H15.5 M11 0.8 L15.5 5 L11 9.2" stroke="#3882b7" stroke-width="1.4" fill="none"/></svg>
<div class="ln" style="left:0;top:80px;color:#b1b1b3">235</div>
<div class="cl" style="left:86px;top:80px">        <span class="k">let</span> all_models <span class="o">=</span> <span class="p">self</span></div>
<div class="ln" style="left:0;top:104px;color:#b1b1b3">236</div>
<div class="cl" style="left:86px;top:104px">            <span class="o">.</span><span class="p">registry</span></div>
<div class="ln" style="left:0;top:128px;color:#b1b1b3">237</div>
<div class="cl" style="left:86px;top:128px">            <span class="o">.</span><span class="f">featured_command_names</span><span class="b">(</span><span class="b">)</span></div>
<div class="ln" style="left:0;top:152px;color:#b1b1b3">238</div>
<div class="cl" style="left:86px;top:152px">            <span class="o">.</span><span class="f">into_iter</span><span class="b">(</span><span class="b">)</span></div>
<div class="ln" style="left:0;top:176px;color:#b1b1b3">239</div>
<div class="cl" style="left:86px;top:176px">            <span class="o">.</span><span class="f">filter_map</span><span class="b">(</span><span class="o">|</span>command_name<span class="o">|</span> <span class="b">{</span></div>
<div class="ln" style="left:0;top:200px;color:#b1b1b3">240</div>
<div class="cl" style="left:86px;top:200px">                <span class="k">let</span> command <span class="o">=</span> <span class="p">self</span><span class="o">.</span><span class="p">registry</span><span class="o">.</span><span class="f">command</span><span class="b">(</span><span class="o">&amp;</span>command_name<span class="b">)</span><span class="o">?</span><span class="o">;</span></div>
<div class="ln" style="left:0;top:224px;color:#b1b1b3">241</div>
<div class="cl" style="left:86px;top:224px">                <span class="k">let</span> menu_text <span class="o">=</span> <span class="t">SharedString</span><span class="b">::</span><span class="f">from</span><span class="b">(</span><span class="t">Arc</span><span class="b">::</span><span class="f">from</span><span class="b">(</span>command<span class="o">.</span><span class="f">menu_text</span><span class="b">(</span><span class="b">)</span><span class="b">)</span><span class="b">)</span><span class="o">;</span></div>
<div class="ln" style="left:0;top:248px;color:#b1b1b3">242</div>
<div class="cl" style="left:86px;top:248px">                <span class="k">let</span> label <span class="o">=</span> command<span class="o">.</span><span class="f">label</span><span class="b">(</span>cx<span class="b">)</span><span class="o">;</span></div>
<div class="ln" style="left:0;top:272px;color:#b1b1b3">243</div>
<div class="cl" style="left:86px;top:272px">                <span class="k">let</span> args <span class="o">=</span> label<span class="o">.</span><span class="p">filter_range</span><span class="o">.</span><span class="p">end</span><span class="o">.</span><span class="f">ne</span><span class="b">(</span><span class="o">&amp;</span>label<span class="o">.</span><span class="p">text</span><span class="o">.</span><span class="f">len</span><span class="b">(</span><span class="b">)</span><span class="b">)</span><span class="o">.</span><span class="f">then</span><span class="b">(</span><span class="o">|</span><span class="o">|</span> <span class="b">{</span></div>
<div class="ln" style="left:0;top:296px;color:#b1b1b3">244</div>
<div class="cl" style="left:86px;top:296px">                    <span class="t">SharedString</span><span class="b">::</span><span class="f">from</span><span class="b">(</span></div>
<div class="ln" style="left:0;top:320px;color:#b1b1b3">245</div>
<div class="cl" style="left:86px;top:320px">                        label<span class="o">.</span><span class="p">text</span><span class="b">[</span>label<span class="o">.</span><span class="p">filter_range</span><span class="o">.</span><span class="p">end</span><span class="o">..</span>label<span class="o">.</span><span class="p">text</span><span class="o">.</span><span class="f">len</span><span class="b">(</span><span class="b">)</span><span class="b">]</span><span class="o">.</span><span class="f">to_owned</span><span class="b">(</span><span class="b">)</span><span class="o">,</span></div>
<div class="ln" style="left:0;top:344px;color:#b1b1b3">246</div>
<div class="cl" style="left:86px;top:344px">                    <span class="b">)</span></div>
<div class="ln" style="left:0;top:368px;color:#b1b1b3">247</div>
<div class="cl" style="left:86px;top:368px">                <span class="b">}</span><span class="b">)</span><span class="o">;</span></div>
<div class="ln" style="left:0;top:392px;color:#b1b1b3">248</div>
<div class="cl" style="left:86px;top:392px">                <span class="t">Some</span><span class="b">(</span><span class="t">SlashCommandEntry</span><span class="b">::</span><span class="t">Info</span><span class="b">(</span><span class="t">SlashCommandInfo</span> <span class="b">{</span></div>
<div class="ln" style="left:0;top:416px;color:#b1b1b3">249</div>
<div class="cl" style="left:86px;top:416px">                    <span class="p">name</span><span class="o">:</span> command_name<span class="o">.</span><span class="f">into</span><span class="b">(</span><span class="b">)</span><span class="o">,</span></div>
<div class="ln" style="left:0;top:440px;color:#b1b1b3">250</div>
<div class="cl" style="left:86px;top:440px">                    <span class="p">description</span><span class="o">:</span> menu_text<span class="o">,</span></div>
<div class="ln" style="left:0;top:464px;color:#b1b1b3">251</div>
<div class="cl" style="left:86px;top:464px">                    args<span class="o">,</span></div>
<div class="ln" style="left:0;top:488px;color:#b1b1b3">252</div>
<div class="cl" style="left:86px;top:488px">                <span class="b">}</span><span class="b">)</span><span class="b">)</span></div>
<div class="ln" style="left:0;top:512px;color:#b1b1b3">253</div>
<div class="cl" style="left:86px;top:512px">            <span class="b">}</span><span class="b">)</span></div>
<div class="ln" style="left:0;top:536px;color:#b1b1b3">254</div>
<div class="cl" style="left:86px;top:536px">            <span class="o">.</span><span class="f">chain</span><span class="b">(</span><span class="b">[</span><span class="t">SlashCommandEntry</span><span class="b">::</span><span class="t">Advert</span> <span class="b">{</span></div>
<div class="ln" style="left:0;top:560px;color:#b1b1b3">255</div>
<div class="cl" style="left:86px;top:560px">                <span class="p">name</span><span class="o">:</span> <span class="s">"create-your-command"</span><span class="o">.</span><span class="f">into</span><span class="b">(</span><span class="b">)</span><span class="o">,</span></div>
<div class="ln" style="left:0;top:584px;color:#b1b1b3">256</div>
<div class="cl" style="left:86px;top:584px">                <span class="p">renderer</span><span class="o">:</span> <span class="o">|</span>cx<span class="o">|</span> <span class="b">{</span></div>
<div class="ln" style="left:0;top:608px;color:#b1b1b3">257</div>
<div class="cl" style="left:86px;top:608px">                    <span class="f">v_flex</span><span class="b">(</span><span class="b">)</span></div>
<div class="ln" style="left:0;top:632px;color:#b1b1b3">258</div>
<div class="cl" style="left:86px;top:632px">                        <span class="o">.</span><span class="f">child</span><span class="b">(</span></div>
<div class="ln" style="left:0;top:656px;color:#b1b1b3">259</div>
<div class="cl" style="left:86px;top:656px">                            <span class="f">h_flex</span><span class="b">(</span><span class="b">)</span></div>
<div class="ln" style="left:0;top:680px;color:#b1b1b3">260</div>
<div class="cl" style="left:86px;top:680px">                                <span class="o">.</span><span class="f">font_buffer</span><span class="b">(</span>cx<span class="b">)</span></div>
<div class="ln" style="left:0;top:704px;color:#b1b1b3">261</div>
<div class="cl" style="left:86px;top:704px">                                <span class="o">.</span><span class="f">items_center</span><span class="b">(</span><span class="b">)</span></div>
<div class="ln" style="left:0;top:728px;color:#b1b1b3">262</div>
<div class="cl" style="left:86px;top:728px">                                <span class="o">.</span><span class="f">gap_1</span><span class="b">(</span><span class="b">)</span></div>
<div class="ln" style="left:0;top:752px;color:#b1b1b3">263</div>
<div class="cl" style="left:86px;top:752px">                                <span class="o">.</span><span class="f">child</span><span class="b">(</span><span class="f">div</span><span class="b">(</span><span class="b">)</span><span class="o">.</span><span class="f">font_buffer</span><span class="b">(</span>cx<span class="b">)</span><span class="o">.</span><span class="f">child</span><span class="b">(</span></div>
<div class="ln" style="left:0;top:776px;color:#b1b1b3">264</div>
<div class="cl" style="left:86px;top:776px">                                    <span class="t">Label</span><span class="b">::</span><span class="f">new</span><span class="b">(</span><span class="s">"create-your-command"</span><span class="b">)</span><span class="o">.</span><span class="f">size</span><span class="b">(</span><span class="t">LabelSize</span><span class="b">::</span><span class="t">Small</span><span class="b">)</span><span class="o">,</span></div>
<div class="ln" style="left:0;top:800px;color:#b1b1b3">265</div>
<div class="cl" style="left:86px;top:800px">                                <span class="b">)</span><span class="b">)</span></div>
<div class="ln" style="left:0;top:824px;color:#b1b1b3">266</div>
<div class="cl" style="left:86px;top:824px">                                <span class="o">.</span><span class="f">child</span><span class="b">(</span><span class="t">Icon</span><span class="b">::</span><span class="f">new</span><span class="b">(</span><span class="t">IconName</span><span class="b">::</span><span class="t">ArrowUpRight</span><span class="b">)</span><span class="o">.</span><span class="f">size</span><span class="b">(</span><span class="t">IconSize</span><span class="b">::</span><span class="t">XSmall</span><span class="b">)</span><span class="b">)</span><span class="o">,</span></div>
<div class="ln" style="left:0;top:848px;color:#b1b1b3">267</div>
<div class="cl" style="left:86px;top:848px">                        <span class="b">)</span></div>
<div class="ln" style="left:0;top:872px;color:#b1b1b3">268</div>
<div class="cl" style="left:86px;top:872px">                        <span class="o">.</span><span class="f">child</span><span class="b">(</span></div>
<div class="ln" style="left:0;top:896px;color:#b1b1b3">269</div>
<div class="cl" style="left:86px;top:896px">                            <span class="t">Label</span><span class="b">::</span><span class="f">new</span><span class="b">(</span><span class="s">"Learn how to create a custom commands"</span><span class="b">)</span></div>
<div class="ln" style="left:0;top:920px;color:#b1b1b3">270</div>
<div class="cl" style="left:86px;top:920px">                                <span class="o">.</span><span class="f">size</span><span class="b">(</span><span class="t">LabelSize</span><span class="b">::</span><span class="t">Small</span><span class="b">)</span></div>
<div class="ln" style="left:0;top:944px;color:#b1b1b3">271</div>
<div class="cl" style="left:86px;top:944px">                                <span class="o">.</span><span class="f">color</span><span class="b">(</span><span class="t">Color</span><span class="b">::</span><span class="t">Muted</span><span class="b">)</span><span class="o">,</span></div>
<div class="ln" style="left:0;top:968px;color:#b1b1b3">272</div>
<div class="cl" style="left:86px;top:968px">                        <span class="b">)</span></div>
<div class="ln" style="left:0;top:992px;color:#b1b1b3">273</div>
<div class="cl" style="left:86px;top:992px">                <span class="b">}</span><span class="o">,</span></div>
<div class="a" style="left:121px;top:54px;width:2px;height:24px;background:#5c78e2"></div>
<svg style="left:63px;top:63px" width="10" height="6" viewBox="0 0 10 6"><path d="M1 1 L5 5 L9 1" stroke="#7e7e87" stroke-width="1.2" fill="none"/></svg>
<div class="a" style="left:705px;top:0;width:1px;height:989px;background:#ececed"></div>
<div class="a" style="left:716px;top:67px;width:2px;height:5px;background:#8d8e92"></div>
<div class="a" style="left:706px;top:658px;width:12px;height:116px;background:#c4c4c6"></div>
<div class="a" style="left:706px;top:663px;width:12px;height:2px;background:#5c8fd6"></div>
<div class="a" style="left:710px;top:838px;width:4px;height:30px;background:#b5c3ee"></div>
</div>
<div class="a" style="left:1158px;top:30px;width:1px;height:1059px;background:#c9c9ca"></div>
<div class="a" style="left:1159px;top:30px;width:638px;height:1059px;background:#fafafa;overflow:hidden">
<div class="a" style="left:0;top:0;width:638px;height:29px;background:#ebebec;border-bottom:1px solid #c9c9ca"></div>
<div class="a" style="left:34px;top:0;width:1px;height:29px;background:#c9c9ca"></div>
<div class="a" style="left:158px;top:0;width:1px;height:29px;background:#c9c9ca"></div>
<div class="a" style="left:246px;top:0;width:1px;height:29px;background:#c9c9ca"></div>
<div class="a" style="left:405px;top:0;width:1px;height:29px;background:#c9c9ca"></div>
<div class="a" style="left:577px;top:0;width:1px;height:29px;background:#c9c9ca"></div>
<div class="a" style="left:247px;top:0;width:158px;height:29px;background:#fafafa"></div>
<svg style="left:11px;top:8px" width="12" height="12" viewBox="0 0 12 12"><path d="M1.6 4.2 A5 5 0 1 1 1.2 7.2" stroke="#393b40" stroke-width="1.3" fill="none"/><path d="M1 1.5 V4.5 H4" stroke="#393b40" stroke-width="1.3" fill="none"/><path d="M6 3.5 V6.2 L7.8 7.6" stroke="#393b40" stroke-width="1.3" fill="none"/></svg>
<div class="a" style="left:56px;top:6px;font-size:14px;line-height:18px;color:#7e7e87;white-space:pre">New Context</div>
<div class="a" style="left:179px;top:6px;font-size:14px;line-height:18px;color:#7e7e87;white-space:pre">History</div>
<div class="a" style="left:267px;top:6px;font-size:14px;line-height:18px;color:#242529;white-space:pre">Add Large IconSi...</div>
<svg style="left:590px;top:8px" width="12" height="12" viewBox="0 0 12 12"><path d="M6 1 V11 M1 6 H11" stroke="#393b40" stroke-width="1.3" fill="none"/></svg>
<svg style="left:617px;top:9px" width="12" height="10" viewBox="0 0 12 10"><path d="M1 1 H11 M1 5 H11 M1 9 H11" stroke="#393b40" stroke-width="1.3" fill="none"/></svg>
<div class="a" style="left:12px;top:41px;font-size:14px;line-height:18px;color:#242529;white-space:pre">Add Large IconSize Option</div>
<div class="a" style="left:300px;top:42px;font-size:12.8px;line-height:16px;color:#6f6f75;white-space:pre">claude-3-5-sonnet-20240620-fast-edit</div>
<svg style="left:519px;top:48px" width="8" height="5" viewBox="0 0 8 5"><path d="M0.5 0.5 L4 4 L7.5 0.5" stroke="#6f6f75" stroke-width="1.1" fill="none"/></svg>
<div class="a" style="left:541px;top:42px;font-size:12.3px;line-height:16px;color:#6f6f75;white-space:pre">2.9k / 100k</div>
<div class="a" style="left:620px;top:43px;width:2.4px;height:2.4px;border-radius:2px;background:#242529"></div>
<div class="a" style="left:620px;top:48px;width:2.4px;height:2.4px;border-radius:2px;background:#242529"></div>
<div class="a" style="left:620px;top:53px;width:2.4px;height:2.4px;border-radius:2px;background:#242529"></div>
<div class="a" style="left:0;top:69px;width:638px;height:1px;background:#dfdfe0"></div>
<div class="a" style="left:0;top:118px;width:638px;height:24px;background:#efeff0"></div>
<div class="badge" style="left:26px;top:82px;width:59px;height:23px;line-height:23px;color:#e9a78f">System</div>
<div class="badge" style="left:27px;top:119px;width:77px;height:23px;line-height:23px;color:#242529"><span style="display:inline-block;width:21px"></span>Default</div>
<div class="badge" style="left:26px;top:155px;width:34px;height:22px;line-height:22px;color:#242529">You</div>
<div class="badge" style="left:27px;top:191px;width:92px;height:22px;line-height:22px;color:#242529"><span style="display:inline-block;width:21px"></span>Workflow</div>
<svg style="left:31px;top:195px" width="14" height="14" viewBox="0 0 14 14"><path d="M11 2.5 H4 A2.3 2.3 0 0 0 4 7 H10 A2.3 2.3 0 0 1 10 11.5 H4" stroke="#393b40" stroke-width="1.4" fill="none"/><circle cx="11.5" cy="2.5" r="1.6" fill="#fafafa" stroke="#393b40" stroke-width="1.3"/><circle cx="2.5" cy="11.5" r="1.6" fill="#fafafa" stroke="#393b40" stroke-width="1.3"/></svg>
<svg style="left:11px;top:125px" width="6" height="10" viewBox="0 0 6 10"><path d="M1 1 L5 5 L1 9" stroke="#5c78e2" stroke-width="1.3" fill="none"/></svg>
<svg style="left:11px;top:197px" width="6" height="10" viewBox="0 0 6 10"><path d="M1 1 L5 5 L1 9" stroke="#5c78e2" stroke-width="1.3" fill="none"/></svg>
<div class="badge" style="left:26px;top:563px;width:70px;height:23px;line-height:23px;color:#5c78e2">Assistant</div>
<div class="rl" style="left:26px;top:241px">```rs zed/crates/ui/src/components/icon.rs:70-77</div>
<div class="rl" style="left:26px;top:265px">// Excerpt from: impl IconSize</div>
<div class="rl" style="left:26px;top:289px">    pub fn rems(self)    Rems {</div>
<svg style="left:224px;top:294px" width="18" height="10" viewBox="0 0 18 10"><path d="M1.5 5 H15.5 M11 0.8 L15.5 5 L11 9.2" stroke="#242529" stroke-width="1.4" fill="none"/></svg>
<div class="rl" style="left:26px;top:313px">        match self {</div>
<div class="rl" style="left:26px;top:337px">            IconSize::Indicator    rems_from_px(10.),</div>
<svg style="left:314px;top:342px" width="18" height="10" viewBox="0 0 18 10"><path d="M1.5 3.3 H13 M1.5 6.7 H13 M11 0.8 L15.3 5 L11 9.2" stroke="#242529" stroke-width="1.3" fill="none"/></svg>
<div class="rl" style="left:26px;top:361px">            IconSize::XSmall    rems_from_px(12.),</div>
<svg style="left:287px;top:366px" width="18" height="10" viewBox="0 0 18 10"><path d="M1.5 3.3 H13 M1.5 6.7 H13 M11 0.8 L15.3 5 L11 9.2" stroke="#242529" stroke-width="1.3" fill="none"/></svg>
<div class="rl" style="left:26px;top:385px">            IconSize::Small    rems_from_px(14.),</div>
<svg style="left:278px;top:390px" width="18" height="10" viewBox="0 0 18 10"><path d="M1.5 3.3 H13 M1.5 6.7 H13 M11 0.8 L15.3 5 L11 9.2" stroke="#242529" stroke-width="1.3" fill="none"/></svg>
<div class="rl" style="left:26px;top:409px">            IconSize::Medium    rems_from_px(16.),</div>
<svg style="left:287px;top:414px" width="18" height="10" viewBox="0 0 18 10"><path d="M1.5 3.3 H13 M1.5 6.7 H13 M11 0.8 L15.3 5 L11 9.2" stroke="#242529" stroke-width="1.3" fill="none"/></svg>
<div class="rl" style="left:26px;top:433px">        }</div>
<div class="rl" style="left:26px;top:457px">    }</div>
<div class="rl" style="left:26px;top:481px">```</div>
<div class="rl" style="left:26px;top:529px">walk me through adding a new size</div>
<div class="rl" style="left:26px;top:601px">Certainly! Let's walk through adding a new size to the <span class="tk">`</span><span class="s">IconSize</span></div>
<div class="rl" style="left:26px;top:625px"><span class="tk">`</span> enum and updating the <span class="tk">`</span><span class="s">rems</span><span class="tk">`</span> method. We'll add a "Large" size</div>
<div class="rl" style="left:26px;top:649px">option.</div>
<div class="rl" style="left:26px;top:697px">Add the new size to the IconSize enum</div>
<div class="rl" style="left:26px;top:721px">First, locate the <span class="tk">`</span><span class="s">IconSize</span><span class="tk">`</span> enum definition (which should be</div>
<div class="rl" style="left:26px;top:745px">earlier in the file) and add the new "Large" variant:</div>
<div class="rl" style="left:26px;top:793px">```<span class="s">rust</span></div>
<div class="rl" style="left:26px;top:817px"><span class="k">pub</span> <span class="k">enum</span> <span class="t">IconSize</span> <span class="b">{</span></div>
<div class="rl" style="left:26px;top:841px">    <span class="t">Indicator</span><span class="o">,</span></div>
<div class="rl" style="left:26px;top:865px">    <span class="t">XSmall</span><span class="o">,</span></div>
<div class="rl" style="left:26px;top:889px">    <span class="t">Small</span><span class="o">,</span></div>
<div class="rl" style="left:26px;top:913px">    <span class="t">Medium</span><span class="o">,</span></div>
<div class="rl" style="left:26px;top:937px">    <span class="t">Large</span><span class="o">,</span> <span class="c">// New size added</span></div>
<div class="rl" style="left:26px;top:961px"><span class="b">}</span></div>
<div class="rl" style="left:26px;top:985px">```</div>
<div class="a" style="left:0;top:1020px;width:638px;height:1px;background:#dfdfe0"></div>
<div class="a" style="left:0;top:1021px;width:638px;height:38px;background:#fafafa"></div>
<svg style="left:13px;top:1034px" width="12" height="12" viewBox="0 0 12 12"><rect x="0.7" y="0.7" width="10.6" height="10.6" rx="1.5" stroke="#393b40" stroke-width="1.3" fill="none"/><path d="M3.8 8 L8 3.8" stroke="#393b40" stroke-width="1.3"/></svg>
<svg style="left:43px;top:1035px" width="12" height="10" viewBox="0 0 12 10"><path d="M0.5 1 H9.5 M3.5 4.8 H11.5 M3.5 8.8 H11.5 M0.8 4 V9" stroke="#393b40" stroke-width="1.2" fill="none"/></svg>
<div class="a" style="left:560px;top:1029px;width:72px;height:22px;border-radius:4px;background:#dfdfe0"></div>
<div class="a" style="left:564px;top:1032px;font-size:14px;line-height:18px;color:#242529">Send</div>
<svg style="left:601px;top:1034px" width="12" height="12" viewBox="0 0 12 12"><path d="M4 4 H8 V8 H4 Z M4 4 V2.5 A1.5 1.5 0 1 0 2.5 4 H4 M8 4 H9.5 A1.5 1.5 0 1 0 8 2.5 V4 M8 8 V9.5 A1.5 1.5 0 1 0 9.5 8 H8 M4 8 H2.5 A1.5 1.5 0 1 0 4 9.5 V8" stroke="#7e7e87" stroke-width="1.1" fill="none"/></svg>
<svg style="left:615px;top:1034px" width="12" height="12" viewBox="0 0 12 12"><path d="M11 1.5 V7 H1.5 M4.5 4 L1.5 7 L4.5 10" stroke="#7e7e87" stroke-width="1.1" fill="none"/></svg>
</div>
<div class="a" style="left:0;top:1089px;width:1797px;height:1px;background:#c9c9ca"></div>
<div class="a" style="left:0;top:1090px;width:1797px;height:28px;background:#dcdcdd"></div>
<div class="a" style="left:114px;top:1098px;font-size:12px;line-height:16px;color:#242529;white-space:pre">Click to restart and update Zed</div>
<div class="a" style="left:1564px;top:1098px;font-size:12.8px;line-height:16px;color:#242529;white-space:pre">234:5</div>
<div class="a" style="left:1621px;top:1098px;font-size:12.5px;line-height:16px;color:#242529;white-space:pre">Rust</div>
<svg style="left:1442px;top:73px" width="16" height="13" viewBox="1442 73 16 13"><path d="M1444.2 83.6 L1447.6 76 L1451 83.6 M1445.4 81 H1449.8 M1450.6 76 L1454 83.6" stroke="#6b6c72" stroke-width="1.3" fill="none"/></svg>
<svg style="left:1188px;top:150px" width="18" height="18" viewBox="1188 150 18 18"><path d="M1191.5 153.6 V165.8 M1194.5 157.6 V165.8 M1197.5 157.6 V165.8 M1199.6 157.2 L1203.6 165.8" stroke="#393b40" stroke-width="1.4" fill="none"/></svg>
<svg style="left:10px;top:1097px" width="16" height="16" viewBox="10 1097 16 16"><path d="M12.4 1100 V1109.4 M12.4 1102.4 H15.6 M12.4 1107.8 H15.6" stroke="#5c78e2" stroke-width="1.3" fill="none"/><rect x="17" y="1099.8" width="5.4" height="4.7" rx="1.4" fill="#5c78e2"/><rect x="17" y="1105.1" width="5.4" height="4.7" rx="1.4" fill="#5c78e2"/><rect x="17.8" y="1104.5" width="3.8" height="0.6" fill="#8fa2ea"/></svg>
<svg style="left:33px;top:1097px" width="16" height="16" viewBox="33 1097 16 16"><path d="M35.4 1100.8 V1108.5 H38.4 M41.2 1101.3 H46.7 M41.2 1108.4 H46.7" stroke="#393b40" stroke-width="1.2" fill="none"/><path d="M35.4 1104.9 H38.4 M41.2 1104.9 H46.7" stroke="#7b7c80" stroke-width="1.2" fill="none"/></svg>
<svg style="left:57px;top:1097px" width="16" height="16" viewBox="57 1097 16 16"><circle cx="63.1" cy="1102.4" r="2.4" fill="#393b40"/><circle cx="67.5" cy="1102.8" r="1.8" fill="#393b40"/><path d="M59 1109.8 Q59 1105.6 63.1 1105.6 Q67.2 1105.6 67.2 1109.8Z" fill="#393b40"/><path d="M67.8 1105.8 Q70.8 1106 71 1109.8 H68.4 Q68.4 1107.2 67.8 1105.8Z" fill="#393b40"/></svg>
<svg style="left:89px;top:1098px" width="12" height="12" viewBox="89 1098 12 12"><path d="M91.3 1105.4 L93.8 1107.8 L98.6 1102" stroke="#393b40" stroke-width="1.3" fill="none"/></svg>
<svg style="left:1660px;top:1095px" width="20" height="20" viewBox="1660 1095 20 20"><path d="M1665.2 1103.2 Q1663.6 1099 1667 1098.6 Q1669.3 1098.4 1670.2 1100 Q1671.1 1098.4 1673.4 1098.6 Q1676.8 1099 1675.2 1103.2 Q1677.2 1104.5 1676.9 1107.6 Q1676.3 1111.4 1670.2 1111.4 Q1664.1 1111.4 1663.5 1107.6 Q1663.2 1104.5 1665.2 1103.2Z" fill="#393b40"/><rect x="1665.3" y="1099.6" width="3.8" height="2.8" rx="1.2" fill="#8a8b8f"/><rect x="1671.3" y="1099.6" width="3.8" height="2.8" rx="1.2" fill="#8a8b8f"/><rect x="1665.5" y="1104.6" width="9.4" height="5.4" rx="2" fill="#f0f0f0"/><path d="M1668.4 1105.8 V1108.2 M1672 1105.8 V1108.2" stroke="#393b40" stroke-width="1.2"/></svg>
<svg style="left:1694px;top:1098px" width="14" height="14" viewBox="1694 1098 14 14"><rect x="1696" y="1100" width="10" height="10" rx="1.3" fill="#393b40"/><path d="M1698 1102.6 L1700 1104.4 L1698 1106.2 M1700.8 1107.4 H1703.8" stroke="#dcdcdd" stroke-width="0.9" fill="none"/></svg>
<svg style="left:1722px;top:1096px" width="18" height="18" viewBox="1722 1096 18 18"><path d="M1731.3 1099.6 Q1732 1104.4 1736.8 1105 Q1732 1105.6 1731.3 1110.6 Q1730.6 1105.6 1725.6 1105 Q1730.6 1104.4 1731.3 1099.6Z" fill="#c9d3f6" stroke="#5c78e2" stroke-width="1.5" stroke-linejoin="round"/><circle cx="1726.6" cy="1100.6" r="1.3" fill="#7f97ea"/><circle cx="1735.6" cy="1109.4" r="1.3" fill="#7f97ea"/></svg>
<svg style="left:1746px;top:1096px" width="18" height="18" viewBox="1746 1096 18 18"><circle cx="1753.6" cy="1103.6" r="3.9" fill="#393b40"/><path d="M1750.2 1105.6 L1749.6 1107.4 L1751.8 1106.8Z" fill="#393b40"/><path d="M1759.6 1104.6 Q1760.6 1105.6 1760.4 1107.2 L1760.2 1109.4 H1757.4 Q1756.2 1110 1754.8 1109.2" stroke="#393b40" stroke-width="1.3" fill="none" stroke-linecap="round"/></svg>
<svg style="left:1772px;top:1096px" width="14" height="18" viewBox="1772 1096 14 18"><path d="M1776.2 1107.6 V1103.6 A2.9 2.9 0 0 1 1782 1103.6 V1107.6 L1783 1108.6 H1775.2 Z" stroke="#393b40" stroke-width="1.3" fill="none" stroke-linejoin="round"/><path d="M1778.2 1110.6 H1780" stroke="#393b40" stroke-width="1.3"/></svg>
<svg style="left:1060px;top:68px" width="20" height="22" viewBox="1060 68 20 22"><circle cx="1068.2" cy="78.2" r="4.7" stroke="#393b40" stroke-width="1.4" fill="none"/><path d="M1071.6 81.6 L1074.6 84.6" stroke="#393b40" stroke-width="1.5"/></svg>
<svg style="left:1084px;top:70px" width="18" height="18" viewBox="1084 70 18 18"><path d="M1093 73.3 Q1093.5 78.5 1098.7 79 Q1093.5 79.5 1093 84.7 Q1092.5 79.5 1087.3 79 Q1092.5 78.5 1093 73.3 Z" stroke="#393b40" stroke-width="1.5" fill="none" stroke-linejoin="round"/><circle cx="1088.7" cy="74.7" r="1.2" fill="#393b40" opacity="0.6"/><circle cx="1097.3" cy="83.1" r="1.2" fill="#393b40" opacity="0.6"/></svg>
<svg style="left:1110px;top:70px" width="14" height="18" viewBox="1110 70 14 18"><path d="M1113.4 73.6 Q1116.8 73.6 1116.8 75.6 V82.4 Q1116.8 84.4 1113.4 84.4 M1120.2 73.6 Q1116.8 73.6 1116.8 75.6 M1120.2 84.4 Q1116.8 84.4 1116.8 82.4" stroke="#393b40" stroke-width="1.3" fill="none"/></svg>
<svg style="left:1132px;top:70px" width="18" height="18" viewBox="1132 70 18 18"><path d="M1135 76.4 H1146.7 M1135 81.6 H1146.7" stroke="#393b40" stroke-width="1.3"/><circle cx="1139" cy="76.4" r="2" fill="#fafafa" stroke="#393b40" stroke-width="1.3"/><circle cx="1142.7" cy="81.6" r="2" fill="#fafafa" stroke="#393b40" stroke-width="1.3"/></svg></body></html>
